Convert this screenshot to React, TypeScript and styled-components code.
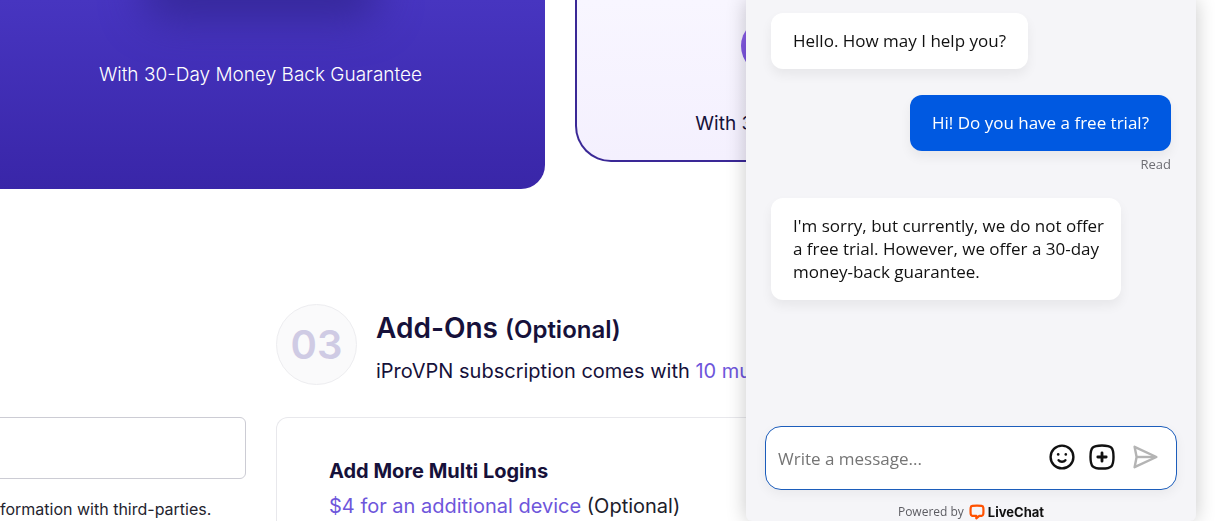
import React from "react";
import styled, { createGlobalStyle } from "styled-components";

const GlobalStyle = createGlobalStyle`
  *, *::before, *::after { box-sizing: border-box; }
  body {
    margin: 0;
    background: #fff;
    color: #16113a;
    font-family: Inter, "Liberation Sans", sans-serif;
  }
  h2, h3, p { margin: 0; }
`;

const Page = styled.main`
  min-height: 100vh;
  display: flex;
  flex-direction: column;
  overflow: hidden;
`;

const Plans = styled.section`
  display: grid;
  grid-template-columns: 1fr 1fr;
  align-items: start;
  gap: 30px;
  margin: 0 71px 0 -24px;
`;

const PlanCard = styled.article<{ $featured?: boolean }>`
  display: flex;
  flex-direction: column;
  align-items: center;
  overflow: hidden;
  font-size: 19px;
  line-height: 30px;
  font-weight: ${(p) => (p.$featured ? 300 : 400)};
  color: ${(p) => (p.$featured ? "#fff" : "#16113a")};
  height: ${(p) => (p.$featured ? 189 : 162)}px;
  padding-top: ${(p) => (p.$featured ? 0 : 18)}px;
  border: solid #3a2896;
  border-width: ${(p) => (p.$featured ? "0" : "0 2px 2px")};
  border-radius: ${(p) => (p.$featured ? "0 0 24px 24px" : "0 0 36px 36px")};
  background: ${(p) =>
    p.$featured
      ? "linear-gradient(#4735c0, #3926a8)"
      : "linear-gradient(#f8f6ff, #f4f0fe)"};
`;

const PlanShade = styled.div`
  flex: none;
  width: 238px;
  height: 56px;
  margin: -56px 0 60px;
  border-radius: 28px;
  box-shadow: 0 20px 40px #36289a;
`;

const PlanButton = styled.div`
  flex: none;
  width: 238px;
  height: 56px;
  margin-bottom: 35px;
  border-radius: 28px;
  background: linear-gradient(#9262ec, #7350dc);
`;

const Details = styled.div`
  flex: 1;
  display: grid;
  grid-template-columns: 270px 1fr;
  gap: 30px;
  margin: 115px 71px 0 -24px;
`;

const EmailColumn = styled.div`
  padding-top: 113px;
  display: flex;
  flex-direction: column;
`;

const EmailInput = styled.input`
  height: 62px;
  width: 100%;
  padding: 0 20px;
  border: 1px solid #ccccd4;
  border-radius: 6px;
  background: #fff;
  font: inherit;
`;

const Note = styled.p`
  padding: 18px 0 0 24px;
  font-size: 16px;
  line-height: 24px;
  color: #24242e;
  white-space: nowrap;
`;

const AddOns = styled.section`
  display: flex;
  flex-direction: column;
`;

const StepHeader = styled.header`
  display: flex;
  gap: 19px;
  height: 81px;
  margin-bottom: 32px;
`;

const StepNumber = styled.span`
  flex: none;
  display: flex;
  align-items: center;
  justify-content: center;
  width: 81px;
  height: 81px;
  border: 1px solid #ededf0;
  border-radius: 50%;
  background: #fafafb;
  color: #cfcbe4;
  font-size: 40px;
  font-weight: 600;
`;

const StepTitle = styled.h2`
  padding-top: 4px;
  font-size: 28px;
  line-height: 40px;
  font-weight: 600;
  small { font-size: 24px; }
`;

const StepText = styled.p`
  padding-top: 6px;
  font-size: 20px;
  line-height: 30px;
  white-space: nowrap;
`;

const Accent = styled.span`
  color: #6e56db;
`;

const AddOnCard = styled.div`
  flex: 1;
  padding: 36px 52px 0;
  border: solid #e8e8ec;
  border-width: 1px 1px 0;
  border-radius: 12px 12px 0 0;
  font-size: 20px;
  line-height: 35px;
`;

const AddOnTitle = styled.h3`
  font-size: 20px;
  line-height: 35px;
  font-weight: 700;
`;

const AddOnPrice = styled.p`
  color: #20202a;
`;

const Chat = styled.aside`
  position: fixed;
  top: 0;
  right: 19px;
  bottom: 0;
  width: 450px;
  display: flex;
  flex-direction: column;
  background: #f5f5f8;
  border-radius: 0 0 6px 6px;
  box-shadow: 0 0 20px rgba(0, 0, 0, 0.22);
  font-family: "Open Sans", "Noto Sans", sans-serif;
  color: #111;
`;

const Messages = styled.div`
  flex: 1;
  display: flex;
  flex-direction: column;
  align-items: flex-start;
  padding: 13px 25px 0;
`;

const Bubble = styled.p<{ $own?: boolean }>`
  max-width: 350px;
  padding: 16px 22px 17px;
  border-radius: 12px;
  font-size: 17px;
  line-height: 23px;
  white-space: nowrap;
  align-self: ${(p) => (p.$own ? "flex-end" : "flex-start")};
  margin-top: ${(p) => (p.$own ? 26 : 0)}px;
  background: ${(p) => (p.$own ? "#0059e1" : "#fff")};
  color: ${(p) => (p.$own ? "#fff" : "#111")};
  box-shadow: 0 6px 12px rgba(0, 0, 0, 0.06);
`;

const Receipt = styled.span`
  align-self: flex-end;
  padding: 3px 0 24px;
  font-size: 13px;
  line-height: 20px;
  color: #6e6e74;
`;

const Composer = styled.form`
  display: flex;
  align-items: center;
  height: 64px;
  margin: 0 19px;
  padding: 0 17px 2px 12px;
  border: 1px solid #1c5dbb;
  border-radius: 16px;
  background: #fff;
  box-shadow: 0 4px 12px rgba(0, 0, 0, 0.05);
`;

const MessageInput = styled.input`
  flex: 1;
  min-width: 0;
  padding: 4px 0 0;
  border: 0;
  outline: 0;
  background: none;
  font: 17px/24px "Open Sans", "Noto Sans", sans-serif;
  &::placeholder { color: #757575; opacity: 1; }
`;

const IconButton = styled.button`
  display: flex;
  margin-left: 12px;
  padding: 0;
  border: 0;
  background: none;
  color: #111;
  &:disabled { margin-left: 15px; color: #b4b4b4; }
`;

const Footer = styled.footer`
  display: flex;
  align-items: center;
  justify-content: center;
  gap: 5px;
  height: 31px;
  padding-top: 13px;
  font-size: 12px;
  line-height: 16px;
  color: #5c5c62;
`;

const Brand = styled.a`
  display: flex;
  align-items: center;
  gap: 3px;
  color: #111;
  font: 700 13px/16px Inter, sans-serif;
  text-decoration: none;
`;

const SmileIcon = () => (
  <svg width="28" height="28" viewBox="0 0 28 28" fill="none" stroke="currentColor" strokeWidth="2.4" strokeLinecap="round">
    <circle cx="14" cy="14" r="11.4" />
    <path d="M10.6 17.2c1.6 2 5.200 2 6.800 0" />
    <circle cx="10.2" cy="11.4" r="1.3" fill="currentColor" stroke="none" />
    <circle cx="17.8" cy="11.4" r="1.3" fill="currentColor" stroke="none" />
  </svg>
);

const PlusIcon = () => (
  <svg width="28" height="28" viewBox="0 0 28 28" fill="none" stroke="currentColor" strokeWidth="2.4" strokeLinecap="round">
    <path d="M14 2.5c9.5 0 11.500 2 11.500 11.500S23.500 25.500 14 25.500 2.500 23.500 2.500 14 4.500 2.500 14 2.500Z" />
    <path d="M14 9.800v8.400M9.800 14h8.400" strokeWidth="2.800" />
  </svg>
);

const SendIcon = () => (
  <svg width="28" height="28" viewBox="0 0 28 28" fill="none" stroke="currentColor" strokeWidth="2.4" strokeLinejoin="round">
    <path d="M3.600 3.800 25.400 14 3.600 24.200 5.600 14Z" />
    <path d="M5.600 14h18" />
  </svg>
);

const LiveChatLogo = () => (
  <svg width="16" height="16" viewBox="0 0 16 16" fill="none" stroke="#ff5100" strokeWidth="2.2" strokeLinejoin="round">
    <path d="M3.400 1.900Q8 1.500 12.600 1.900 14.100 2.100 14.300 3.600 14.600 6.700 14.300 10.100 14.100 11.600 12.600 11.800H10.300L7.300 14.300V11.800H3.400Q1.900 11.600 1.700 10.100 1.400 6.700 1.700 3.600 1.900 2.100 3.400 1.900Z" />
  </svg>
);

export default function App() {
  return (
    <>
      <GlobalStyle />
      <Page>
        <Plans>
          <PlanCard $featured>
            <PlanShade />
            <p>With 30-Day Money Back Guarantee</p>
          </PlanCard>
          <PlanCard>
            <PlanButton />
            <p>With 30-Day Money Back Guarantee</p>
          </PlanCard>
        </Plans>
        <Details>
          <EmailColumn>
            <EmailInput type="email" aria-label="Email address" />
            <Note>formation with third-parties.</Note>
          </EmailColumn>
          <AddOns>
            <StepHeader>
              <StepNumber>03</StepNumber>
              <div>
                <StepTitle>
                  Add-Ons <small>(Optional)</small>
                </StepTitle>
                <StepText>
                  iProVPN subscription comes with <Accent>10 multi-logins</Accent>
                </StepText>
              </div>
            </StepHeader>
            <AddOnCard>
              <AddOnTitle>Add More Multi Logins</AddOnTitle>
              <AddOnPrice>
                <Accent>$4 for an additional device</Accent> (Optional)
              </AddOnPrice>
            </AddOnCard>
          </AddOns>
        </Details>
      </Page>
      <Chat aria-label="Live chat">
        <Messages>
          <Bubble>Hello. How may I help you?</Bubble>
          <Bubble $own>Hi! Do you have a free trial?</Bubble>
          <Receipt>Read</Receipt>
          <Bubble>
            I'm sorry, but currently, we do not offer
            <br />
            a free trial. However, we offer a 30-day
            <br />
            money-back guarantee.
          </Bubble>
        </Messages>
        <Composer onSubmit={(e) => e.preventDefault()}>
          <MessageInput aria-label="Message" placeholder="Write a message..." />
          <IconButton type="button" aria-label="Emoji"><SmileIcon /></IconButton>
          <IconButton type="button" aria-label="More options"><PlusIcon /></IconButton>
          <IconButton type="submit" aria-label="Send" disabled><SendIcon /></IconButton>
        </Composer>
        <Footer>
          Powered by
          <Brand href="#"><LiveChatLogo />LiveChat</Brand>
        </Footer>
      </Chat>
    </>
  );
}
